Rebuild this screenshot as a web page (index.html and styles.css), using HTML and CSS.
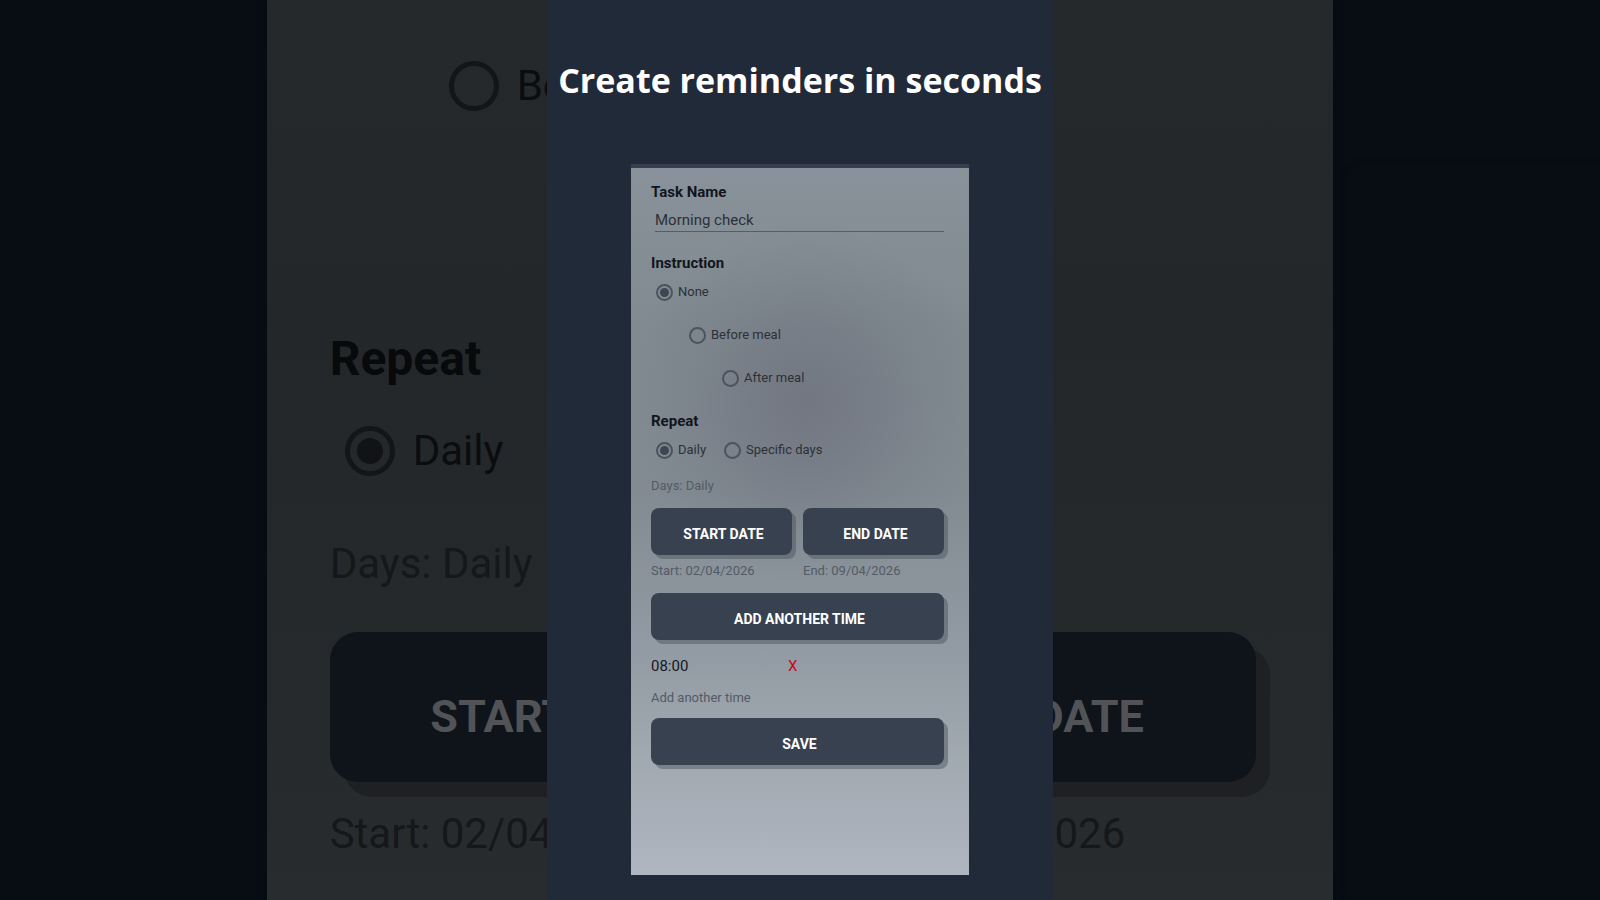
FILE: index.html
```html
<!DOCTYPE html>
<html lang="en">

<head>
    <meta charset="UTF-8">
    <meta name="viewport" content="width=device-width, initial-scale=1.0">
    <title>Create reminders in seconds</title>
    <link rel="stylesheet" href="styles.css">
</head>

<body>

    <!-- dimmed, enlarged form behind the main column -->
    <div class="backdrop" aria-hidden="true" inert>
        <div class="backdrop-panel">
            <label class="radio indent-1"><input type="radio" name="bg-instruction">Before meal</label>
            <h2>Repeat</h2>
            <label class="radio"><input type="radio" name="bg-repeat" checked>Daily</label>
            <p class="hint">Days: Daily</p>
            <div class="dates">
                <button type="button" class="btn">Start date</button>
                <button type="button" class="btn">End date</button>
                <p class="hint">Start: 02/04/2026</p>
                <p class="hint">End: 09/04/2026</p>
            </div>
        </div>
        <div class="backdrop-side"></div>
    </div>

    <main class="column">
        <h1>Create reminders in seconds</h1>

        <form class="card">
            <label class="heading" for="taskName">Task Name</label>
            <input class="task-input" type="text" id="taskName" value="Morning check">

            <fieldset class="stacked">
                <legend class="heading">Instruction</legend>
                <label class="radio"><input type="radio" name="instruction" checked>None</label>
                <label class="radio indent-1"><input type="radio" name="instruction">Before meal</label>
                <label class="radio indent-2"><input type="radio" name="instruction">After meal</label>
            </fieldset>

            <fieldset class="inline">
                <legend class="heading">Repeat</legend>
                <label class="radio"><input type="radio" name="repeat" checked>Daily</label>
                <label class="radio"><input type="radio" name="repeat">Specific days</label>
            </fieldset>

            <p class="hint days">Days: Daily</p>

            <div class="dates">
                <button type="button" class="btn">Start date</button>
                <button type="button" class="btn">End date</button>
                <p class="hint">Start: 02/04/2026</p>
                <p class="hint">End: 09/04/2026</p>
            </div>

            <button type="button" class="btn add-time">Add another time</button>

            <div class="time-row">
                <span>08:00</span>
                <button type="button" class="remove-btn" aria-label="Remove 08:00">X</button>
            </div>
            <p class="hint another">Add another time</p>

            <button type="submit" class="btn save">Save</button>
        </form>
    </main>

</body>

</html>
```

FILE: styles.css
```css
* {
    box-sizing: border-box;
}

body {
    margin: 0;
    background-color: #080c13;
    font-family: Roboto, sans-serif;
    color: #15181f;
}

h1,
h2,
p {
    margin: 0;
}

button {
    font-family: inherit;
    cursor: pointer;
    border: none;
}

/* main column */
.column {
    position: relative;
    display: flex;
    flex-direction: column;
    max-width: 506px;
    min-height: 100vh;
    margin: 0 auto;
    padding: 56px 0 25px;
    background-color: #212a38;
}

h1 {
    margin-bottom: 60px;
    font-family: "Open Sans", sans-serif;
    font-size: 34px;
    font-weight: bold;
    line-height: 48px;
    text-align: center;
    color: white;
}

.card {
    flex: 1;
    display: flex;
    flex-direction: column;
    margin: 0 84px;
    padding: 12px 25px 20px 20px;
    border-top: 4px solid #343e4c;
    background:
        radial-gradient(circle 180px at 52% 33%, rgba(104, 106, 120, 0.6), rgba(104, 106, 120, 0.4) 35%, rgba(104, 106, 120, 0.12) 75%, rgba(104, 106, 120, 0)),
        linear-gradient(#89929a, #808a90 22%, #828b92 46%, #929ba3 68%, #a1a9b1 84%, #b0b6c0);
}

.heading {
    padding: 0;
    font-size: 15px;
    font-weight: bold;
    line-height: 24px;
    color: #12151d;
}

.task-input {
    height: 23px;
    margin: 5px 0 0 4px;
    padding: 0;
    border: none;
    border-bottom: 1px solid #555e66;
    background: none;
    font-family: inherit;
    font-size: 15px;
    color: #2b3037;
}

fieldset {
    display: flex;
    margin: 19px 0 0;
    padding: 5px 0 0;
    border: none;
}

.stacked {
    flex-direction: column;
    gap: 19px;
}

.inline {
    gap: 18px;
}

.radio {
    display: flex;
    align-items: center;
    gap: 5px;
    padding-left: 5px;
    font-size: 13px;
    line-height: 24px;
    color: #2c3138;
}

.inline .radio + .radio {
    padding-left: 0;
}

.indent-1 {
    margin-left: 33px;
}

.indent-2 {
    margin-left: 66px;
}

input[type="radio"] {
    appearance: none;
    display: grid;
    place-items: center;
    width: 17px;
    height: 17px;
    margin: 0;
    border: 2px solid #4d535e;
    border-radius: 50%;
}

input[type="radio"]:checked::before {
    content: "";
    width: 9px;
    height: 9px;
    border-radius: 50%;
    background-color: #3d4652;
}

.hint {
    font-size: 13px;
    line-height: 20px;
    color: #535b65;
}

.days {
    margin: 14px 0 12px;
}

.btn {
    height: 47px;
    padding: 4px 0 0 4px;
    border-radius: 8px;
    background-color: #38414f;
    box-shadow: 4px 4px 0 rgba(70, 78, 88, 0.45);
    font-size: 14px;
    font-weight: bold;
    text-transform: uppercase;
    color: white;
}

.dates {
    display: grid;
    grid-template-columns: 1fr 1fr;
    gap: 6px 11px;
}

.add-time {
    margin: 12px 0 16px;
}

.time-row {
    display: grid;
    grid-template-columns: 137px 1fr;
    font-size: 15px;
    line-height: 20px;
}

.remove-btn {
    justify-self: start;
    padding: 0;
    background: none;
    font-size: 15px;
    color: #c00a1c;
}

.another {
    margin: 12px 0 10px;
}

/* backdrop */
.backdrop {
    position: absolute;
    inset: 0;
    display: flex;
    overflow: hidden;
}

.backdrop-panel {
    flex: none;
    width: calc(100% * 2 / 3);
    margin-left: calc(100% / 6);
    padding: 58px 77px 0 63px;
    background: linear-gradient(#26292c, #242729 35%, #26292b 70%, #292c2e);
    box-shadow: 0 0 8px #0a0d0f;
}

.backdrop-side {
    flex: 1;
    margin: 166px 0 0 16px;
    border-top-left-radius: 12px;
    box-shadow: 0 0 6px 1px #0a0d0e;
    clip-path: inset(-12px 0 0 -12px);
}

.backdrop h2 {
    margin: 217px 0 36px;
    font-size: 48px;
    line-height: 56px;
    color: #07090b;
}

.backdrop .radio {
    gap: 18px;
    padding-left: 15px;
    font-size: 42px;
    line-height: 56px;
    color: #0a0c0f;
}

.backdrop .indent-1 {
    margin-left: 104px;
}

.backdrop input[type="radio"] {
    width: 50px;
    height: 50px;
    border: 5px solid #131519;
}

.backdrop input[type="radio"]:checked::before {
    width: 26px;
    height: 26px;
    background-color: #111317;
}

.backdrop .hint {
    font-size: 42px;
    line-height: 56px;
    color: #15171a;
}

.backdrop .radio + .hint {
    margin: 57px 0 40px;
}

.backdrop .btn {
    height: 150px;
    padding: 18px 0 0 14px;
    border-radius: 28px;
    background-color: #0f131a;
    box-shadow: 14px 15px 0 #1e2023;
    font-size: 45px;
    color: #515356;
}

.backdrop .dates {
    gap: 24px 35px;
}
```
